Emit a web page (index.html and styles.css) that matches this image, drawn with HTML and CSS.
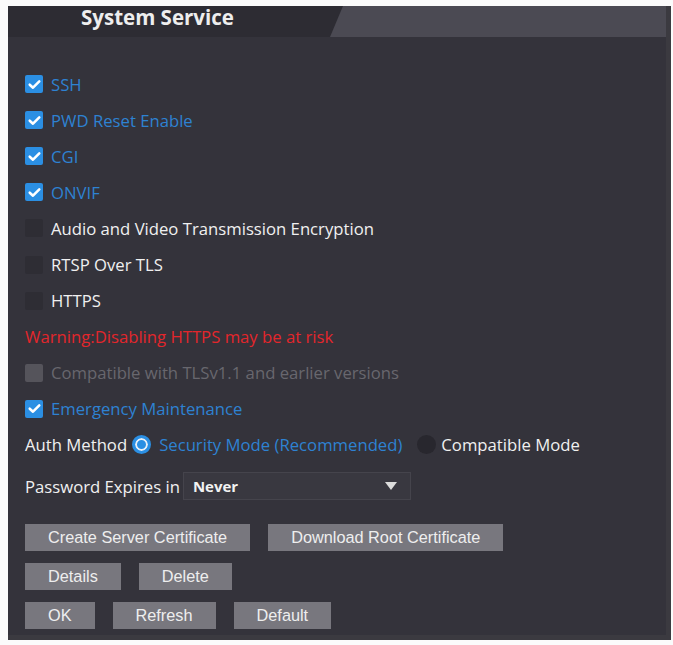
FILE: index.html
```html
<!DOCTYPE html>
<html>
<head>
<meta charset="utf-8">
<link rel="stylesheet" href="styles.css">
</head>
<body>
<div class="panel">
  <div class="header">
    <div class="title">System Service</div>
    <div class="spacer"></div>
    <div class="tab-shade"></div>
  </div>
  <div class="rows">
    <div class="row"><span class="cb on"><svg viewBox="0 0 16 16"><path d="M3.5 8.2 L6.6 11 L12.5 5" /></svg></span><span class="lbl blue">SSH</span></div>
    <div class="row"><span class="cb on"><svg viewBox="0 0 16 16"><path d="M3.5 8.2 L6.6 11 L12.5 5" /></svg></span><span class="lbl blue">PWD Reset Enable</span></div>
    <div class="row"><span class="cb on"><svg viewBox="0 0 16 16"><path d="M3.5 8.2 L6.6 11 L12.5 5" /></svg></span><span class="lbl blue">CGI</span></div>
    <div class="row"><span class="cb on"><svg viewBox="0 0 16 16"><path d="M3.5 8.2 L6.6 11 L12.5 5" /></svg></span><span class="lbl blue">ONVIF</span></div>
    <div class="row"><span class="cb off"></span><span class="lbl">Audio and Video Transmission Encryption</span></div>
    <div class="row"><span class="cb off"></span><span class="lbl">RTSP Over TLS</span></div>
    <div class="row"><span class="cb off"></span><span class="lbl">HTTPS</span></div>
    <div class="row"><span class="warn">Warning:Disabling HTTPS may be at risk</span></div>
    <div class="row"><span class="cb dis"></span><span class="lbl grey">Compatible with TLSv1.1 and earlier versions</span></div>
    <div class="row"><span class="cb on"><svg viewBox="0 0 16 16"><path d="M3.5 8.2 L6.6 11 L12.5 5" /></svg></span><span class="lbl blue">Emergency Maintenance</span></div>
    <div class="row">
      <span class="plain">Auth Method</span>
      <span class="radio on"></span><span class="lbl-r blue">Security Mode (Recommended)</span>
      <span class="radio off"></span><span class="lbl-r">Compatible Mode</span>
    </div>
  </div>
  <div class="pwd-row">
    <span class="plain">Password Expires in</span>
    <div class="select"><span class="sel-val">Never</span><span class="arrow"></span></div>
  </div>
  <div class="btns">
    <div class="btn-row"><button class="btn">Create Server Certificate</button><button class="btn">Download Root Certificate</button></div>
    <div class="btn-row"><button class="btn">Details</button><button class="btn">Delete</button></div>
    <div class="btn-row"><button class="btn">OK</button><button class="btn">Refresh</button><button class="btn">Default</button></div>
  </div>
</div>
</body>
</html>
```
FILE: styles.css
```css
html, body {
  margin: 0;
  padding: 0;
  background: #fbfbfb;
}
body {
  padding: 6px 2px 5px 8px;
  font-family: "Open Sans", "Noto Sans", sans-serif;
}
.panel {
  background: #34333b;
  height: 634px;
  box-sizing: border-box;
  border-right: 5px solid #3b3a40;
  border-bottom: 5px solid #3b3a40;
}
.header {
  display: flex;
  height: 31px;
  background: #2d2c33;
}
.title {
  padding-left: 73px;
  color: #eeeeee;
  font-weight: 700;
  font-size: 20.5px;
  line-height: 22px;
}
.spacer { flex: 1; }
.tab-shade {
  width: 336px;
  background: #4b4a53;
  clip-path: polygon(13px 0, 100% 0, 100% 100%, 0 100%);
}
.rows {
  margin-top: 29px;
  display: flex;
  flex-direction: column;
  padding-left: 17px;
}
.row {
  height: 36.1px;
  display: flex;
  align-items: center;
}
.cb {
  width: 18px;
  height: 18px;
  border-radius: 2px;
  box-sizing: border-box;
  margin-right: 8px;
  flex: none;
  display: flex;
  align-items: center;
  justify-content: center;
}
.cb.on { background: #2b8fe3; }
.cb.off { background: #2e2d34; }
.cb.dis { background: #55545b; }
.cb svg { width: 17px; height: 17px; }
.cb svg path {
  fill: none;
  stroke: #ffffff;
  stroke-width: 2.4;
  stroke-linecap: round;
  stroke-linejoin: round;
}
.lbl, .plain, .lbl-r, .warn {
  font-size: 16.7px;
  color: #f0f0f0;
  white-space: nowrap;
}
.blue { color: #2e82d2; }
.grey { color: #68676e; }
.warn { color: #e3262b; }
.plain { margin-right: 5px; }
.radio {
  width: 19px;
  height: 19px;
  border-radius: 50%;
  box-sizing: border-box;
  flex: none;
  margin-right: 8px;
}
.radio.on {
  background: #2b8fe3;
  border: 3px solid #2b8fe3;
  box-shadow: inset 0 0 0 2px #e8f0f8;
}
.radio.off {
  background: #28272e;
  margin-left: 15px;
  margin-right: 5px;
}
.pwd-row {
  margin-top: 9px;
  padding-left: 17px;
  display: flex;
  align-items: center;
  height: 28px;
}
.pwd-row .plain { margin-right: 3px; }
.select {
  width: 228px;
  height: 28px;
  box-sizing: border-box;
  background: #393840;
  border: 1px solid #45444c;
  display: flex;
  align-items: center;
  padding-left: 9px;
  padding-right: 13px;
}
.sel-val {
  color: #f2f2f2;
  font-weight: 700;
  font-size: 15px;
  flex: 1;
}
.arrow {
  width: 0;
  height: 0;
  border-left: 6px solid transparent;
  border-right: 6px solid transparent;
  border-top: 8px solid #dcdcdc;
}
.btns {
  margin-top: 24px;
  padding-left: 17px;
  display: flex;
  flex-direction: column;
  gap: 12px;
}
.btn-row {
  display: flex;
  gap: 18px;
}
.btn {
  height: 27px;
  padding: 0 23px;
  border: none;
  background: #78777e;
  color: #eeeeee;
  font-family: "Liberation Sans", Arial, sans-serif;
  font-size: 16.3px;
  line-height: 27px;
}
```
